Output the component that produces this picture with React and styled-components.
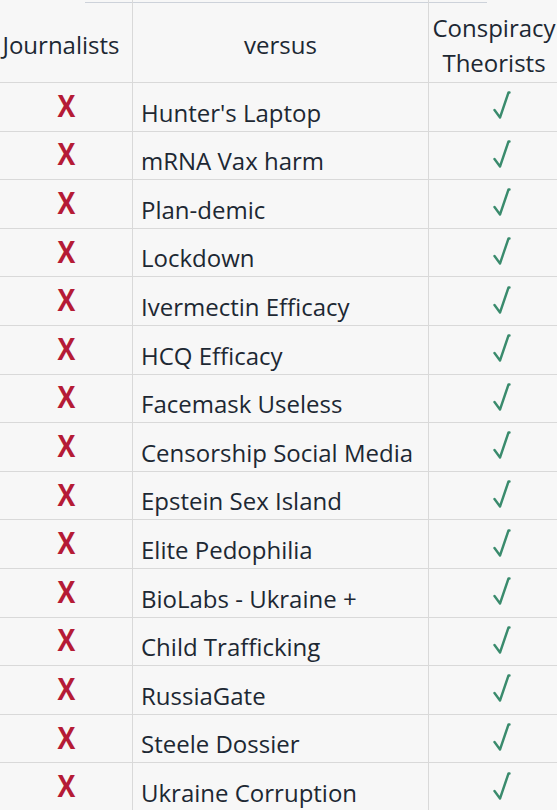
import styled, { createGlobalStyle } from "styled-components";

const GlobalStyle = createGlobalStyle`
  html, body {
    margin: 0;
    padding: 0;
    background: #f7f7f7;
    overflow: hidden;
  }
`;

const Sheet = styled.div`
  width: 573px;
  font-family: "Open Sans", "Liberation Sans", sans-serif;
  color: #1d2833;
  background: #f7f7f7;
`;

const HeaderRow = styled.div`
  display: grid;
  grid-template-columns: 133px 296px 144px;
  height: 83px;
  box-sizing: border-box;
  border-bottom: 1px solid #d9d9d9;
  background: linear-gradient(#cdd2da, #cdd2da) no-repeat 85px 2px / 402px 1px;
`;

const HeadCell = styled.div`
  display: flex;
  align-items: center;
  justify-content: center;
  text-align: center;
  padding-top: 7px;
  box-sizing: border-box;
  font-size: 24px;
  line-height: 35px;
  white-space: nowrap;
  border-right: ${({ $last }) => ($last ? "none" : "1px solid #d9d9d9")};
  padding-right: ${({ $shift }) => $shift || 0}px;
`;

const Row = styled.div`
  display: grid;
  grid-template-columns: 133px 296px 144px;
  height: 48.6px;
  box-sizing: border-box;
  border-bottom: 1px solid #d9d9d9;
`;

const MarkCell = styled.div`
  display: flex;
  align-items: center;
  justify-content: center;
  border-right: ${({ $last }) => ($last ? "none" : "1px solid #d9d9d9")};
`;

const Topic = styled.div`
  display: flex;
  align-items: flex-end;
  padding: 0 0 6px 8px;
  font-size: 24px;
  line-height: 24px;
  white-space: nowrap;
  border-right: 1px solid #d9d9d9;
`;

const Cross = styled.span`
  font-family: "Open Sans", "Liberation Sans", sans-serif;
  font-weight: 700;
  font-size: 31px;
  line-height: 1;
  color: #b51b36;
  transform: scaleX(0.86);
  margin-bottom: 3px;
`;

const Tick = styled.svg`
  width: 18px;
  height: 28px;
  margin-left: 2px;
  margin-bottom: 3px;
`;

const topics = [
  "Hunter's Laptop",
  "mRNA Vax harm",
  "Plan-demic",
  "Lockdown",
  "Ivermectin Efficacy",
  "HCQ Efficacy",
  "Facemask Useless",
  "Censorship Social Media",
  "Epstein Sex Island",
  "Elite Pedophilia",
  "BioLabs - Ukraine +",
  "Child Trafficking",
  "RussiaGate",
  "Steele Dossier",
  "Ukraine Corruption",
];

function Check() {
  return (
    <Tick viewBox="0 0 18 28">
      <path
        d="M1.5 19 L7 26.5 L15.5 1.5 L16.5 1.5"
        fill="none"
        stroke="#3a8b6d"
        strokeWidth="2.4"
        strokeLinecap="round"
        strokeLinejoin="round"
      />
    </Tick>
  );
}

export default function App() {
  return (
    <>
      <GlobalStyle />
      <Sheet>
        <HeaderRow>
          <HeadCell $shift={10}>Journalists</HeadCell>
          <HeadCell>versus</HeadCell>
          <HeadCell $last $shift={14}>
            Conspiracy
            <br />
            Theorists
          </HeadCell>
        </HeaderRow>
        {topics.map((t) => (
          <Row key={t}>
            <MarkCell>
              <Cross>X</Cross>
            </MarkCell>
            <Topic>{t}</Topic>
            <MarkCell $last>
              <Check />
            </MarkCell>
          </Row>
        ))}
      </Sheet>
    </>
  );
}
